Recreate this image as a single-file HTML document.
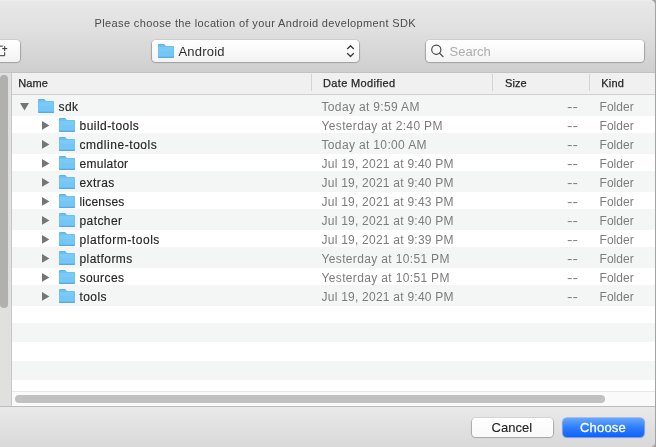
<!DOCTYPE html>
<html><head><meta charset="utf-8">
<style>
*{box-sizing:border-box;margin:0;padding:0}
html,body{width:656px;height:447px;overflow:hidden;background:#a4a4a4}
body{font-family:"Liberation Sans",sans-serif;position:relative}
#win{position:absolute;left:-20px;top:0;width:674.6px;height:447px;border-radius:0 5px 5px 0;overflow:hidden;background:#d4d4d4}
#inner{position:absolute;left:20px;top:0;width:656px;height:447px;will-change:transform}
#tb{position:absolute;left:0;top:0;width:656px;height:72px;background:linear-gradient(#eeeeee 0,#e8e8e8 1.5px,#dfdfdf 32px,#cfcfcf 71px)}
.abs{position:absolute}
.title{position:absolute;left:94.6px;top:16.5px;font-size:11px;line-height:13px;color:#4c4c4c;letter-spacing:.365px;white-space:nowrap}
.btn{position:absolute;background:linear-gradient(#ffffff,#f3f3f3);border-radius:4px;box-shadow:0 0 0 .5px rgba(0,0,0,.1),0 .6px 1px .4px rgba(0,0,0,.2)}
#nf{left:-20px;top:40px;width:40px;height:22px}
#dd{left:152px;top:40px;width:207px;height:22px}
#dd span{position:absolute;left:26.5px;top:4px;font-size:13px;line-height:15px;color:#303030;letter-spacing:.2px}
#search{left:426px;top:40px;width:217.8px;height:22px}
#search span{position:absolute;left:23.5px;top:3.5px;font-size:13px;line-height:15px;color:#adadad}
#side{position:absolute;left:0;top:72px;width:11px;height:335px;background:#e0e0de;border-top:1px solid #c6c6c6;border-bottom:1px solid #bcbcbc}
#side div{position:absolute;left:0;top:2px;width:7.6px;height:233px;border-radius:3.8px;background:#b0b0af}
#table{position:absolute;left:11px;top:72px;width:645px;height:335px;border-top:1px solid #c2c2c2;border-left:1px solid #c6c6c6;border-bottom:1px solid #bcbcbc;
 background:#fff}
.band{position:absolute;left:12px;width:644px;background:#f4f5f5}
#thead{position:absolute;left:12px;top:73px;width:644px;height:22px;background:#f0f0f0;border-bottom:1px solid #cfcfcf}
.th{position:absolute;top:77px;font-size:11px;line-height:13px;color:#262626;-webkit-text-stroke:.25px #262626;white-space:nowrap}
.sep{position:absolute;top:74px;width:1px;height:17px;background:#d4d4d4}
.t{position:absolute;font-size:12px;line-height:15px;white-space:nowrap;color:#7c7c7c}
.n{color:#262626;-webkit-text-stroke:.15px #262626}
.k{letter-spacing:.05px}
.s{transform:scaleX(1.36);transform-origin:0 0}
.fold{position:absolute}
#hs{position:absolute;left:12px;top:391px;width:644px;height:15px;background:#fafafa;border-top:1px solid #e8e8e8}
#hs div{position:absolute;left:3px;top:2.8px;width:590px;height:8px;border-radius:4px;background:#c1c1c1}
#bottom{position:absolute;left:0;top:407px;width:656px;height:40px;background:linear-gradient(#e9e9e9,#d9d9d9)}
#cancel{left:472px;top:417.5px;width:81px;height:19.7px;font-size:13px;text-align:center;line-height:19.5px;color:#222;letter-spacing:.02px;padding-right:1.4px;background:linear-gradient(#fff,#f9f9f9);-webkit-text-stroke:.12px #222}
#choose{left:562.5px;top:417.5px;padding-right:1px;width:81.9px;height:19.8px;font-size:13px;text-align:center;line-height:20px;color:#fff;letter-spacing:.15px;-webkit-text-stroke:.3px #fff;background:linear-gradient(#66a8fb,#2f7efb 50%,#0c62ff);box-shadow:0 0 0 .5px rgba(20,90,230,.5),0 .5px 1px .5px rgba(0,40,160,.25)}
</style></head><body>
<div id="win"><div id="inner">
<div id="tb"></div>
<div class="title">Please choose the location of your Android development SDK</div>
<div class="btn" id="nf"><svg class="abs" style="left:20px;top:4px" width="9" height="14" viewBox="0 0 9 14"><path d="M0 2.1H2.8M4.7 8.2V11.7H0" fill="none" stroke="#3a3a3a" stroke-width="1"/><path d="M2.2 4.6H7.2M4.7 2.1V7.1" fill="none" stroke="#333" stroke-width="1"/></svg></div>
<div class="btn" id="dd">
<svg class="fold" style="left:6px;top:4px" width="16" height="14" viewBox="0 0 16 14"><path d="M0 1.2Q0 0 1.2 0H5.7Q6.3 0 6.7 .5L7.8 1.9H10V5H0Z" fill="#55ade7"/><path d="M.5 1.4Q.5 .7 1.3 .7H5.6Q6 .7 6.3 1L7.3 2.3H.5Z" fill="#6fbff1"/><path d="M0 2.1H7L7.8 1.9H14.8Q16 1.9 16 3.1V12.8Q16 14 14.8 14H1.2Q0 14 0 12.8Z" fill="#62b6ec"/><path d="M.45 2.6H15.55V12.6Q15.55 13.4 14.8 13.4H1.2Q.45 13.4 .45 12.6Z" fill="#79caf6"/><path d="M.45 7H15.55V12.6Q15.55 13.4 14.8 13.4H1.2Q.45 13.4 .45 12.6Z" fill="#73c6f5"/><path d="M.45 12.1H15.55V12.6H.45Z" fill="#92d6fa"/><path d="M0 12.6H16V12.8Q16 14 14.8 14H1.2Q0 14 0 12.8Z" fill="#52abe6"/></svg>
<span>Android</span>
<svg class="abs" style="left:193px;top:4px" width="11" height="15" viewBox="0 0 11 15"><path d="M2.5 4.7L5.5 1.7L8.5 4.7M2.5 9.5L5.5 12.5L8.5 9.5" fill="none" stroke="#3c3c3c" stroke-width="1.25" stroke-linecap="round" stroke-linejoin="round"/></svg>
</div>
<div class="btn" id="search">
<svg class="abs" style="left:4px;top:4px" width="15" height="15" viewBox="0 0 15 15"><circle cx="6.3" cy="5.7" r="4.6" fill="none" stroke="#454545" stroke-width="1.15"/><path d="M9.6 9.1L13 12.6" stroke="#454545" stroke-width="1.3" stroke-linecap="round"/></svg>
<span>Search</span></div>
<div id="side"><div></div></div>
<div id="table"></div>
<div id="thead"></div>
<div class="th" style="left:18.3px;letter-spacing:.05px">Name</div>
<div class="th" style="left:323px;letter-spacing:.36px">Date Modified</div>
<div class="th" style="left:505px;letter-spacing:.05px">Size</div>
<div class="th" style="left:601.3px;letter-spacing:.2px">Kind</div>
<div class="sep" style="left:311px"></div><div class="sep" style="left:492px"></div><div class="sep" style="left:589px"></div>
<div class="band" style="top:95px;height:21px"></div><div class="band" style="top:133px;height:21px"></div><div class="band" style="top:171px;height:21px"></div><div class="band" style="top:209px;height:21px"></div><div class="band" style="top:247px;height:21px"></div><div class="band" style="top:285px;height:21px"></div><div class="band" style="top:323px;height:19px"></div><div class="band" style="top:361px;height:19px"></div>
<svg class="abs" style="left:20px;top:102.5px" width="9" height="8" viewBox="0 0 9 8"><path d="M0 0H9L4.5 7.6Z" fill="#757575"/></svg><svg class="fold" style="left:38px;top:99px" width="16" height="14" viewBox="0 0 16 14"><path d="M0 1.2Q0 0 1.2 0H5.7Q6.3 0 6.7 .5L7.8 1.9H10V5H0Z" fill="#55ade7"/><path d="M.5 1.4Q.5 .7 1.3 .7H5.6Q6 .7 6.3 1L7.3 2.3H.5Z" fill="#6fbff1"/><path d="M0 2.1H7L7.8 1.9H14.8Q16 1.9 16 3.1V12.8Q16 14 14.8 14H1.2Q0 14 0 12.8Z" fill="#62b6ec"/><path d="M.45 2.6H15.55V12.6Q15.55 13.4 14.8 13.4H1.2Q.45 13.4 .45 12.6Z" fill="#79caf6"/><path d="M.45 7H15.55V12.6Q15.55 13.4 14.8 13.4H1.2Q.45 13.4 .45 12.6Z" fill="#73c6f5"/><path d="M.45 12.1H15.55V12.6H.45Z" fill="#92d6fa"/><path d="M0 12.6H16V12.8Q16 14 14.8 14H1.2Q0 14 0 12.8Z" fill="#52abe6"/></svg><div class="t n" style="left:58.5px;top:100px;letter-spacing:0.42px">sdk</div><div class="t d" style="left:321.5px;top:100px;letter-spacing:0.35px">Today at 9:59 AM</div><div class="t s" style="left:566.9px;top:100px">--</div><div class="t k" style="left:599.5px;top:100px">Folder</div>
<svg class="abs" style="left:42px;top:120.5px" width="8" height="9" viewBox="0 0 8 9"><path d="M0 0L7.4 4.4L0 8.8Z" fill="#757575"/></svg><svg class="fold" style="left:59px;top:118px" width="16" height="14" viewBox="0 0 16 14"><path d="M0 1.2Q0 0 1.2 0H5.7Q6.3 0 6.7 .5L7.8 1.9H10V5H0Z" fill="#55ade7"/><path d="M.5 1.4Q.5 .7 1.3 .7H5.6Q6 .7 6.3 1L7.3 2.3H.5Z" fill="#6fbff1"/><path d="M0 2.1H7L7.8 1.9H14.8Q16 1.9 16 3.1V12.8Q16 14 14.8 14H1.2Q0 14 0 12.8Z" fill="#62b6ec"/><path d="M.45 2.6H15.55V12.6Q15.55 13.4 14.8 13.4H1.2Q.45 13.4 .45 12.6Z" fill="#79caf6"/><path d="M.45 7H15.55V12.6Q15.55 13.4 14.8 13.4H1.2Q.45 13.4 .45 12.6Z" fill="#73c6f5"/><path d="M.45 12.1H15.55V12.6H.45Z" fill="#92d6fa"/><path d="M0 12.6H16V12.8Q16 14 14.8 14H1.2Q0 14 0 12.8Z" fill="#52abe6"/></svg><div class="t n" style="left:79.5px;top:119px;letter-spacing:0.46px">build-tools</div><div class="t d" style="left:321.5px;top:119px;letter-spacing:0.35px">Yesterday at 2:40 PM</div><div class="t s" style="left:566.9px;top:119px">--</div><div class="t k" style="left:599.5px;top:119px">Folder</div>
<svg class="abs" style="left:42px;top:139.5px" width="8" height="9" viewBox="0 0 8 9"><path d="M0 0L7.4 4.4L0 8.8Z" fill="#757575"/></svg><svg class="fold" style="left:59px;top:137px" width="16" height="14" viewBox="0 0 16 14"><path d="M0 1.2Q0 0 1.2 0H5.7Q6.3 0 6.7 .5L7.8 1.9H10V5H0Z" fill="#55ade7"/><path d="M.5 1.4Q.5 .7 1.3 .7H5.6Q6 .7 6.3 1L7.3 2.3H.5Z" fill="#6fbff1"/><path d="M0 2.1H7L7.8 1.9H14.8Q16 1.9 16 3.1V12.8Q16 14 14.8 14H1.2Q0 14 0 12.8Z" fill="#62b6ec"/><path d="M.45 2.6H15.55V12.6Q15.55 13.4 14.8 13.4H1.2Q.45 13.4 .45 12.6Z" fill="#79caf6"/><path d="M.45 7H15.55V12.6Q15.55 13.4 14.8 13.4H1.2Q.45 13.4 .45 12.6Z" fill="#73c6f5"/><path d="M.45 12.1H15.55V12.6H.45Z" fill="#92d6fa"/><path d="M0 12.6H16V12.8Q16 14 14.8 14H1.2Q0 14 0 12.8Z" fill="#52abe6"/></svg><div class="t n" style="left:79.5px;top:138px;letter-spacing:0.55px">cmdline-tools</div><div class="t d" style="left:321.5px;top:138px;letter-spacing:0.35px">Today at 10:00 AM</div><div class="t s" style="left:566.9px;top:138px">--</div><div class="t k" style="left:599.5px;top:138px">Folder</div>
<svg class="abs" style="left:42px;top:158.5px" width="8" height="9" viewBox="0 0 8 9"><path d="M0 0L7.4 4.4L0 8.8Z" fill="#757575"/></svg><svg class="fold" style="left:59px;top:156px" width="16" height="14" viewBox="0 0 16 14"><path d="M0 1.2Q0 0 1.2 0H5.7Q6.3 0 6.7 .5L7.8 1.9H10V5H0Z" fill="#55ade7"/><path d="M.5 1.4Q.5 .7 1.3 .7H5.6Q6 .7 6.3 1L7.3 2.3H.5Z" fill="#6fbff1"/><path d="M0 2.1H7L7.8 1.9H14.8Q16 1.9 16 3.1V12.8Q16 14 14.8 14H1.2Q0 14 0 12.8Z" fill="#62b6ec"/><path d="M.45 2.6H15.55V12.6Q15.55 13.4 14.8 13.4H1.2Q.45 13.4 .45 12.6Z" fill="#79caf6"/><path d="M.45 7H15.55V12.6Q15.55 13.4 14.8 13.4H1.2Q.45 13.4 .45 12.6Z" fill="#73c6f5"/><path d="M.45 12.1H15.55V12.6H.45Z" fill="#92d6fa"/><path d="M0 12.6H16V12.8Q16 14 14.8 14H1.2Q0 14 0 12.8Z" fill="#52abe6"/></svg><div class="t n" style="left:79.5px;top:157px;letter-spacing:0.27px">emulator</div><div class="t d" style="left:321.5px;top:157px;letter-spacing:0.24px">Jul 19, 2021 at 9:40 PM</div><div class="t s" style="left:566.9px;top:157px">--</div><div class="t k" style="left:599.5px;top:157px">Folder</div>
<svg class="abs" style="left:42px;top:177.5px" width="8" height="9" viewBox="0 0 8 9"><path d="M0 0L7.4 4.4L0 8.8Z" fill="#757575"/></svg><svg class="fold" style="left:59px;top:175px" width="16" height="14" viewBox="0 0 16 14"><path d="M0 1.2Q0 0 1.2 0H5.7Q6.3 0 6.7 .5L7.8 1.9H10V5H0Z" fill="#55ade7"/><path d="M.5 1.4Q.5 .7 1.3 .7H5.6Q6 .7 6.3 1L7.3 2.3H.5Z" fill="#6fbff1"/><path d="M0 2.1H7L7.8 1.9H14.8Q16 1.9 16 3.1V12.8Q16 14 14.8 14H1.2Q0 14 0 12.8Z" fill="#62b6ec"/><path d="M.45 2.6H15.55V12.6Q15.55 13.4 14.8 13.4H1.2Q.45 13.4 .45 12.6Z" fill="#79caf6"/><path d="M.45 7H15.55V12.6Q15.55 13.4 14.8 13.4H1.2Q.45 13.4 .45 12.6Z" fill="#73c6f5"/><path d="M.45 12.1H15.55V12.6H.45Z" fill="#92d6fa"/><path d="M0 12.6H16V12.8Q16 14 14.8 14H1.2Q0 14 0 12.8Z" fill="#52abe6"/></svg><div class="t n" style="left:79.5px;top:176px;letter-spacing:0.42px">extras</div><div class="t d" style="left:321.5px;top:176px;letter-spacing:0.24px">Jul 19, 2021 at 9:40 PM</div><div class="t s" style="left:566.9px;top:176px">--</div><div class="t k" style="left:599.5px;top:176px">Folder</div>
<svg class="abs" style="left:42px;top:196.5px" width="8" height="9" viewBox="0 0 8 9"><path d="M0 0L7.4 4.4L0 8.8Z" fill="#757575"/></svg><svg class="fold" style="left:59px;top:194px" width="16" height="14" viewBox="0 0 16 14"><path d="M0 1.2Q0 0 1.2 0H5.7Q6.3 0 6.7 .5L7.8 1.9H10V5H0Z" fill="#55ade7"/><path d="M.5 1.4Q.5 .7 1.3 .7H5.6Q6 .7 6.3 1L7.3 2.3H.5Z" fill="#6fbff1"/><path d="M0 2.1H7L7.8 1.9H14.8Q16 1.9 16 3.1V12.8Q16 14 14.8 14H1.2Q0 14 0 12.8Z" fill="#62b6ec"/><path d="M.45 2.6H15.55V12.6Q15.55 13.4 14.8 13.4H1.2Q.45 13.4 .45 12.6Z" fill="#79caf6"/><path d="M.45 7H15.55V12.6Q15.55 13.4 14.8 13.4H1.2Q.45 13.4 .45 12.6Z" fill="#73c6f5"/><path d="M.45 12.1H15.55V12.6H.45Z" fill="#92d6fa"/><path d="M0 12.6H16V12.8Q16 14 14.8 14H1.2Q0 14 0 12.8Z" fill="#52abe6"/></svg><div class="t n" style="left:79.5px;top:195px;letter-spacing:0.2px">licenses</div><div class="t d" style="left:321.5px;top:195px;letter-spacing:0.24px">Jul 19, 2021 at 9:43 PM</div><div class="t s" style="left:566.9px;top:195px">--</div><div class="t k" style="left:599.5px;top:195px">Folder</div>
<svg class="abs" style="left:42px;top:215.5px" width="8" height="9" viewBox="0 0 8 9"><path d="M0 0L7.4 4.4L0 8.8Z" fill="#757575"/></svg><svg class="fold" style="left:59px;top:213px" width="16" height="14" viewBox="0 0 16 14"><path d="M0 1.2Q0 0 1.2 0H5.7Q6.3 0 6.7 .5L7.8 1.9H10V5H0Z" fill="#55ade7"/><path d="M.5 1.4Q.5 .7 1.3 .7H5.6Q6 .7 6.3 1L7.3 2.3H.5Z" fill="#6fbff1"/><path d="M0 2.1H7L7.8 1.9H14.8Q16 1.9 16 3.1V12.8Q16 14 14.8 14H1.2Q0 14 0 12.8Z" fill="#62b6ec"/><path d="M.45 2.6H15.55V12.6Q15.55 13.4 14.8 13.4H1.2Q.45 13.4 .45 12.6Z" fill="#79caf6"/><path d="M.45 7H15.55V12.6Q15.55 13.4 14.8 13.4H1.2Q.45 13.4 .45 12.6Z" fill="#73c6f5"/><path d="M.45 12.1H15.55V12.6H.45Z" fill="#92d6fa"/><path d="M0 12.6H16V12.8Q16 14 14.8 14H1.2Q0 14 0 12.8Z" fill="#52abe6"/></svg><div class="t n" style="left:79.5px;top:214px;letter-spacing:0.42px">patcher</div><div class="t d" style="left:321.5px;top:214px;letter-spacing:0.24px">Jul 19, 2021 at 9:40 PM</div><div class="t s" style="left:566.9px;top:214px">--</div><div class="t k" style="left:599.5px;top:214px">Folder</div>
<svg class="abs" style="left:42px;top:234.5px" width="8" height="9" viewBox="0 0 8 9"><path d="M0 0L7.4 4.4L0 8.8Z" fill="#757575"/></svg><svg class="fold" style="left:59px;top:232px" width="16" height="14" viewBox="0 0 16 14"><path d="M0 1.2Q0 0 1.2 0H5.7Q6.3 0 6.7 .5L7.8 1.9H10V5H0Z" fill="#55ade7"/><path d="M.5 1.4Q.5 .7 1.3 .7H5.6Q6 .7 6.3 1L7.3 2.3H.5Z" fill="#6fbff1"/><path d="M0 2.1H7L7.8 1.9H14.8Q16 1.9 16 3.1V12.8Q16 14 14.8 14H1.2Q0 14 0 12.8Z" fill="#62b6ec"/><path d="M.45 2.6H15.55V12.6Q15.55 13.4 14.8 13.4H1.2Q.45 13.4 .45 12.6Z" fill="#79caf6"/><path d="M.45 7H15.55V12.6Q15.55 13.4 14.8 13.4H1.2Q.45 13.4 .45 12.6Z" fill="#73c6f5"/><path d="M.45 12.1H15.55V12.6H.45Z" fill="#92d6fa"/><path d="M0 12.6H16V12.8Q16 14 14.8 14H1.2Q0 14 0 12.8Z" fill="#52abe6"/></svg><div class="t n" style="left:79.5px;top:233px;letter-spacing:0.55px">platform-tools</div><div class="t d" style="left:321.5px;top:233px;letter-spacing:0.24px">Jul 19, 2021 at 9:39 PM</div><div class="t s" style="left:566.9px;top:233px">--</div><div class="t k" style="left:599.5px;top:233px">Folder</div>
<svg class="abs" style="left:42px;top:253.5px" width="8" height="9" viewBox="0 0 8 9"><path d="M0 0L7.4 4.4L0 8.8Z" fill="#757575"/></svg><svg class="fold" style="left:59px;top:251px" width="16" height="14" viewBox="0 0 16 14"><path d="M0 1.2Q0 0 1.2 0H5.7Q6.3 0 6.7 .5L7.8 1.9H10V5H0Z" fill="#55ade7"/><path d="M.5 1.4Q.5 .7 1.3 .7H5.6Q6 .7 6.3 1L7.3 2.3H.5Z" fill="#6fbff1"/><path d="M0 2.1H7L7.8 1.9H14.8Q16 1.9 16 3.1V12.8Q16 14 14.8 14H1.2Q0 14 0 12.8Z" fill="#62b6ec"/><path d="M.45 2.6H15.55V12.6Q15.55 13.4 14.8 13.4H1.2Q.45 13.4 .45 12.6Z" fill="#79caf6"/><path d="M.45 7H15.55V12.6Q15.55 13.4 14.8 13.4H1.2Q.45 13.4 .45 12.6Z" fill="#73c6f5"/><path d="M.45 12.1H15.55V12.6H.45Z" fill="#92d6fa"/><path d="M0 12.6H16V12.8Q16 14 14.8 14H1.2Q0 14 0 12.8Z" fill="#52abe6"/></svg><div class="t n" style="left:79.5px;top:252px;letter-spacing:0.42px">platforms</div><div class="t d" style="left:321.5px;top:252px;letter-spacing:0.35px">Yesterday at 10:51 PM</div><div class="t s" style="left:566.9px;top:252px">--</div><div class="t k" style="left:599.5px;top:252px">Folder</div>
<svg class="abs" style="left:42px;top:272.5px" width="8" height="9" viewBox="0 0 8 9"><path d="M0 0L7.4 4.4L0 8.8Z" fill="#757575"/></svg><svg class="fold" style="left:59px;top:270px" width="16" height="14" viewBox="0 0 16 14"><path d="M0 1.2Q0 0 1.2 0H5.7Q6.3 0 6.7 .5L7.8 1.9H10V5H0Z" fill="#55ade7"/><path d="M.5 1.4Q.5 .7 1.3 .7H5.6Q6 .7 6.3 1L7.3 2.3H.5Z" fill="#6fbff1"/><path d="M0 2.1H7L7.8 1.9H14.8Q16 1.9 16 3.1V12.8Q16 14 14.8 14H1.2Q0 14 0 12.8Z" fill="#62b6ec"/><path d="M.45 2.6H15.55V12.6Q15.55 13.4 14.8 13.4H1.2Q.45 13.4 .45 12.6Z" fill="#79caf6"/><path d="M.45 7H15.55V12.6Q15.55 13.4 14.8 13.4H1.2Q.45 13.4 .45 12.6Z" fill="#73c6f5"/><path d="M.45 12.1H15.55V12.6H.45Z" fill="#92d6fa"/><path d="M0 12.6H16V12.8Q16 14 14.8 14H1.2Q0 14 0 12.8Z" fill="#52abe6"/></svg><div class="t n" style="left:79.5px;top:271px;letter-spacing:0.42px">sources</div><div class="t d" style="left:321.5px;top:271px;letter-spacing:0.35px">Yesterday at 10:51 PM</div><div class="t s" style="left:566.9px;top:271px">--</div><div class="t k" style="left:599.5px;top:271px">Folder</div>
<svg class="abs" style="left:42px;top:291.5px" width="8" height="9" viewBox="0 0 8 9"><path d="M0 0L7.4 4.4L0 8.8Z" fill="#757575"/></svg><svg class="fold" style="left:59px;top:289px" width="16" height="14" viewBox="0 0 16 14"><path d="M0 1.2Q0 0 1.2 0H5.7Q6.3 0 6.7 .5L7.8 1.9H10V5H0Z" fill="#55ade7"/><path d="M.5 1.4Q.5 .7 1.3 .7H5.6Q6 .7 6.3 1L7.3 2.3H.5Z" fill="#6fbff1"/><path d="M0 2.1H7L7.8 1.9H14.8Q16 1.9 16 3.1V12.8Q16 14 14.8 14H1.2Q0 14 0 12.8Z" fill="#62b6ec"/><path d="M.45 2.6H15.55V12.6Q15.55 13.4 14.8 13.4H1.2Q.45 13.4 .45 12.6Z" fill="#79caf6"/><path d="M.45 7H15.55V12.6Q15.55 13.4 14.8 13.4H1.2Q.45 13.4 .45 12.6Z" fill="#73c6f5"/><path d="M.45 12.1H15.55V12.6H.45Z" fill="#92d6fa"/><path d="M0 12.6H16V12.8Q16 14 14.8 14H1.2Q0 14 0 12.8Z" fill="#52abe6"/></svg><div class="t n" style="left:79.5px;top:290px;letter-spacing:0.42px">tools</div><div class="t d" style="left:321.5px;top:290px;letter-spacing:0.24px">Jul 19, 2021 at 9:40 PM</div><div class="t s" style="left:566.9px;top:290px">--</div><div class="t k" style="left:599.5px;top:290px">Folder</div>
<div id="hs"><div></div></div>
<div id="bottom"></div>
<div class="btn" id="cancel">Cancel</div>
<div class="btn" id="choose">Choose</div>
</div></div>
</body></html>
